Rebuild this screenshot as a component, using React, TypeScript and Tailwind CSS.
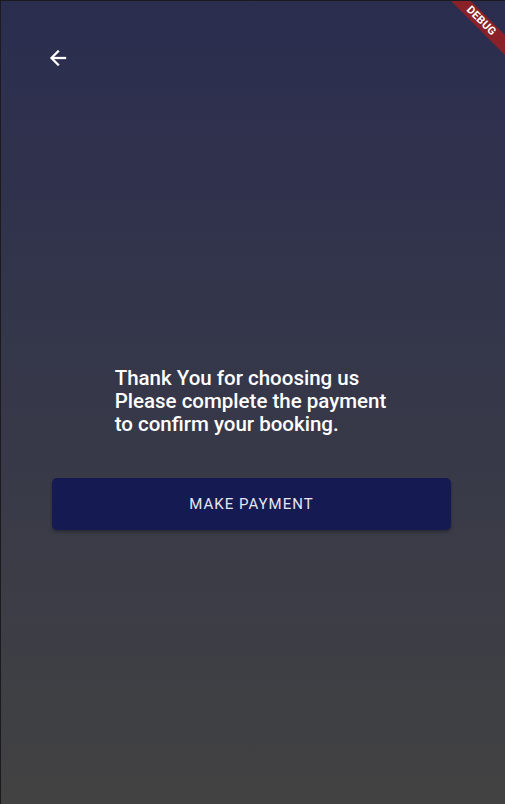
import React from "react";

export default function App() {
  return (
    <div className="relative h-[804px] w-[505px] overflow-hidden border-l border-t border-[#1a1a1f] bg-gradient-to-b from-[#2b2d4f] to-[#424242] font-['Roboto',sans-serif]">
      <div className="flex flex-col">
        <div className="flex h-[114px] items-start pl-[45px] pt-[45px]">
          <svg width="24" height="24" viewBox="0 0 24 24" fill="none">
            <path d="M20 11H7.83l5.59-5.59L12 4l-8 8 8 8 1.41-1.41L7.83 13H20v-2z" fill="#ffffff" stroke="#ffffff" strokeWidth="0.3" />
          </svg>
        </div>
        <div className="mt-[252px] flex justify-center">
          <p className="mr-[5px] text-[20.5px] font-medium leading-[23px] text-white">
            Thank You for choosing us
            <br />
            Please complete the payment
            <br />
            to confirm your booking.
          </p>
        </div>
        <div className="mt-[42px] pl-[51px] pr-[54px]">
          <button className="flex h-[52px] w-full items-center justify-center rounded-[5px] bg-[#161a52] text-[15px] font-normal tracking-[1px] text-[#e6e6f2] shadow-[0_2px_3px_rgba(0,0,0,0.3)]">
            MAKE PAYMENT
          </button>
        </div>
      </div>
      <div className="absolute left-[420px] top-[13px] w-[120px] rotate-45 bg-[#8a2028] text-center text-[11px] font-bold leading-[14px] tracking-[0.3px] text-white">
        DEBUG
      </div>
    </div>
  );
}
